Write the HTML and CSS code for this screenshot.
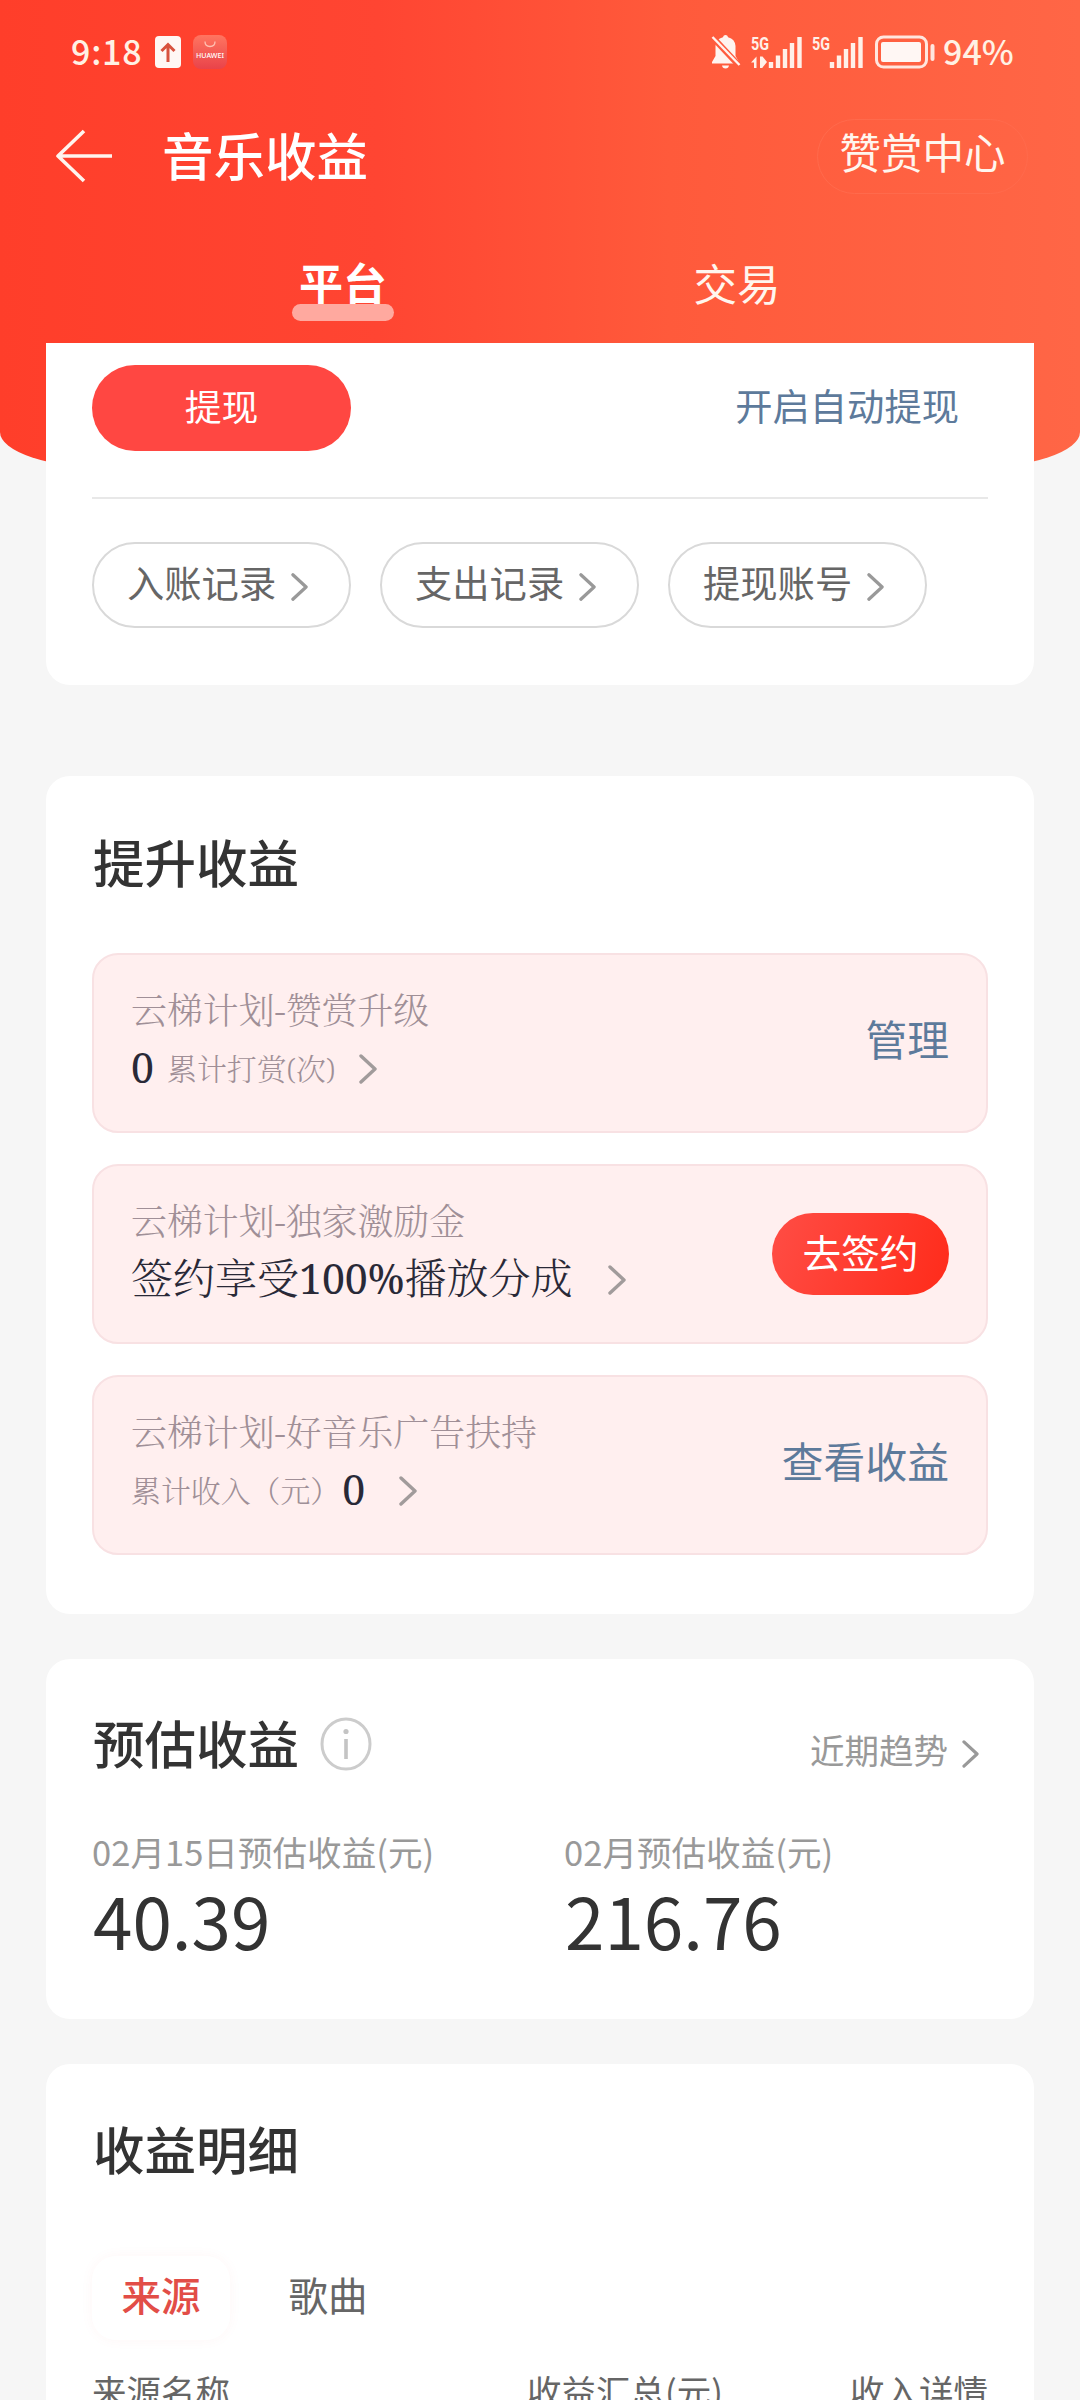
FILE: index.html
```html
<!DOCTYPE html>
<html lang="zh-CN">
<head>
<meta charset="utf-8">
<title>音乐收益</title>
<link rel="stylesheet" href="styles.css">
</head>
<body>
<svg class="defs" width="0" height="0" aria-hidden="true">
  <symbol id="chevron" viewBox="0 0 18 30"><path d="M2 2 16 15 2 28" fill="none" stroke="currentColor" stroke-width="3.400" stroke-linecap="round" stroke-linejoin="round"/></symbol>
</svg>
<header class="header">
  <div class="status">
    <div class="status-left">
      <span class="clock">9:18</span>
      <svg class="upload" width="26" height="32" viewBox="0 0 26 32"><rect width="26" height="32" rx="4" fill="#fff7f4"/><path d="M13 26V9M6.500 15 13 8.500 19.500 15" fill="none" stroke="#d8523e" stroke-width="3"/></svg>
      <svg class="store" width="34" height="34" viewBox="0 0 34 34"><defs><linearGradient id="g" x2="0" y2="1"><stop stop-color="#ff7560"/><stop offset="1" stop-color="#e9434a"/></linearGradient></defs><rect width="34" height="34" rx="8" fill="url(#g)"/><path d="M12 6.500q0 5 5 5t5-5" fill="none" stroke="#ffc0b2" stroke-width="1.300"/><text x="17" y="22.500" text-anchor="middle" textLength="28" lengthAdjust="spacingAndGlyphs" class="store-name">HUAWEI</text></svg>
    </div>
    <div class="status-right">
      <svg width="30" height="36" viewBox="0 0 30 36"><path d="M14.500 1q2 0 2.600 2.200Q24 5 24.500 12v10l3.500 6v1.500H1V28l3.500-6V12Q5 5 11.900 3.200 12.500 1 14.500 1Z" fill="#fff4f0"/><path d="M11 31.500h7q-.5 3-3.500 3t-3.500-3Z" fill="#fff4f0"/><path d="M0 1.500 28 31.500" stroke="#ff5b3e" stroke-width="6"/><path d="M1.500 3 28.500 31" stroke="#fff4f0" stroke-width="2.400"/></svg>
      <svg class="signal" width="51" height="34" viewBox="0 0 51 34"><text x="0" y="15" textLength="18" lengthAdjust="spacingAndGlyphs" class="net">5G</text><path d="M5.500 33V21.500L0 27.500h3V33ZM9 33V21.500h2.500L16 27l-4.500 5.500V33Z" fill="#fff0e8"/><path d="M20 33v-6M27 33V20.500M34 33V14M41 33V8M48.500 33V2" stroke="#fff0e8" stroke-width="4.400"/></svg>
      <svg class="signal" width="51" height="34" viewBox="0 0 51 34"><text x="0" y="15" textLength="18" lengthAdjust="spacingAndGlyphs" class="net">5G</text><path d="M20 33v-6M27 33V20.500M34 33V14M41 33V8M48.500 33V2" stroke="#fff0e8" stroke-width="4.400"/></svg>
      <svg class="battery" width="60" height="34" viewBox="0 0 60 34"><rect x="1.500" y="2" width="50" height="30" rx="7" fill="none" stroke="#ffe6de" stroke-width="3"/><rect x="6" y="7" width="40" height="20" rx="2" fill="#fff7f4"/><rect x="55.500" y="9" width="4" height="17" rx="2" fill="#ffe6de"/></svg>
      <span class="percent">94%</span>
    </div>
  </div>
  <div class="navbar">
    <svg class="back" width="58" height="54" viewBox="0 0 58 54"><path d="M56 27H2M28 2 2 27 28 52" fill="none" stroke="#fff4ee" stroke-width="3.600" stroke-linejoin="round"/></svg>
    <h1 class="page-title">音乐收益</h1>
    <a class="reward">赞赏中心</a>
  </div>
  <nav class="tabs">
    <a class="tab tab-active">平台</a>
    <a class="tab">交易</a>
  </nav>
</header>

<main class="content">
  <section class="card balance">
    <div class="withdraw-row">
      <button class="withdraw">提现</button>
      <a class="auto">开启自动提现</a>
    </div>
    <div class="pills">
      <a class="pill">入账记录<svg class="chev-s"><use href="#chevron"/></svg></a>
      <a class="pill">支出记录<svg class="chev-s"><use href="#chevron"/></svg></a>
      <a class="pill">提现账号<svg class="chev-s"><use href="#chevron"/></svg></a>
    </div>
  </section>

  <section class="card boost">
    <h2 class="title">提升收益</h2>
    <div class="plans">
      <div class="plan">
        <div class="plan-text">
          <div class="plan-name">云梯计划-赞赏升级</div>
          <div class="plan-line"><span class="num">0</span><span class="unit">累计打赏(次)</span><svg class="chev"><use href="#chevron"/></svg></div>
        </div>
        <a class="plan-link">管理</a>
      </div>
      <div class="plan">
        <div class="plan-text">
          <div class="plan-name">云梯计划-独家激励金</div>
          <div class="plan-line"><span class="offer">签约享受<span class="rate">100%</span>播放分成</span><svg class="chev chev-far"><use href="#chevron"/></svg></div>
        </div>
        <button class="sign">去签约</button>
      </div>
      <div class="plan">
        <div class="plan-text">
          <div class="plan-name">云梯计划-好音乐广告扶持</div>
          <div class="plan-line"><span class="unit">累计收入（元）</span><span class="num num-after">0</span><svg class="chev chev-far"><use href="#chevron"/></svg></div>
        </div>
        <a class="plan-link">查看收益</a>
      </div>
    </div>
  </section>

  <section class="card estimate">
    <div class="estimate-head">
      <h2 class="title">预估收益</h2>
      <svg class="info" width="52" height="54" viewBox="0 0 52 54"><ellipse cx="26" cy="27" rx="24" ry="25" fill="none" stroke="#ccc" stroke-width="3"/><circle cx="26" cy="14.500" r="2.600" fill="#c4c4c4"/><path d="M26 22v20" stroke="#c4c4c4" stroke-width="3.600"/></svg>
      <a class="trend">近期趋势<svg class="chev-s chev-trend"><use href="#chevron"/></svg></a>
    </div>
    <div class="figures">
      <div class="figure"><div class="label">02月15日预估收益(元)</div><div class="value">40.39</div></div>
      <div class="figure"><div class="label">02月预估收益(元)</div><div class="value">216.76</div></div>
    </div>
  </section>

  <section class="card detail">
    <h2 class="title">收益明细</h2>
    <div class="switch">
      <a class="seg seg-active">来源</a>
      <a class="seg">歌曲</a>
    </div>
    <div class="table-head"><span>来源名称</span><span>收益汇总(元)</span><span>收入详情</span></div>
  </section>
</main>
</body>
</html>
```
FILE: styles.css
```css
* { box-sizing: border-box; }
html, body { margin: 0; width: 1080px; height: 2400px; overflow: hidden; }
body {
  background: #f6f6f6;
  color: #333;
  font-family: "Noto Sans CJK SC", sans-serif;
}
h1, h2 { margin: 0; font-weight: 500; }
button { border: 0; padding: 0; font-family: inherit; color: #fff; }
svg { display: block; flex: none; }
.defs { position: absolute; }

.header {
  height: 468px;
  background: linear-gradient(90deg, #ff3e2a 0%, #ff4532 35%, #ff5a3b 62%, #ff6646 100%);
  border-radius: 0 0 110px 110px / 0 0 36px 36px;
  color: #fff6ee;
}
.status { display: flex; justify-content: space-between; height: 104px; padding: 0 67px 0 71px; }
.status-left, .status-right { display: flex; align-items: center; }
.clock, .percent { font-size: 34px; line-height: 40px; padding-bottom: 2px; font-weight: 500; color: #fff1e4; }
.clock { width: 84px; letter-spacing: .8px; }
.store { margin-left: 12px; }
.store-name { font: 500 7px "Noto Sans", sans-serif; fill: #fff; }
.net { font: 700 19px "Roboto", sans-serif; fill: #fff0e8; }
.signal { margin-left: 10px; overflow: visible; }
.battery { margin: 0 8px 0 12px; }
.percent { width: 70px; }

.navbar { display: flex; align-items: center; height: 104px; padding: 0 52px 0 56px; }
.page-title { margin-left: 48px; font-size: 51.500px; line-height: 70px; color: #fff; flex: 1; padding-bottom: 5px; }
.reward {
  width: 211px; height: 75px; border: 1px solid #ff6a4c; border-radius: 38px;
  font-size: 41.500px; line-height: 63px; text-align: center;
}
.tabs { display: grid; grid-template-columns: 394px 394px; justify-content: center; height: 135px; padding-top: 44px; }
.tab { position: relative; font-size: 43.500px; line-height: 61px; text-align: center; }
.tab-active { font-size: 44px; font-weight: 700; color: #fff; }
.tab-active::after {
  content: ""; position: absolute; left: 50%; top: 52px; margin-left: -51px;
  width: 102px; height: 17px; border-radius: 9px; background: #ffa99f;
}

.content { display: flex; flex-direction: column; margin-top: -125px; }
.card { margin: 0 46px; padding: 0 46px; background: #fff; border-radius: 24px; }
.title { font-size: 51.500px; line-height: 72px; color: #333; padding-left: 1px; }

.balance { position: relative; height: 342px; padding-top: 22px; border-radius: 0 0 24px 24px; }
.withdraw-row { display: flex; justify-content: space-between; height: 134px; border-bottom: 2px solid #e8e8e8; padding-right: 29px; }
.withdraw { width: 259px; height: 86px; padding-bottom: 7px; border-radius: 43px; background: #ff4742; font-size: 36.800px; line-height: 50px; }
.auto { font-size: 37.300px; line-height: 80px; color: #5d7a9b; }
.pills { display: flex; gap: 29px; margin-top: 43px; }
.pill {
  display: flex; align-items: center; width: 259px; height: 86px; padding: 0 0 7px 33px;
  border: 2px solid #d9d9d9; border-radius: 43px; font-size: 37.300px; line-height: 50px; color: #666; white-space: nowrap;
}
.chev-s { width: 17px; height: 30px; margin: 10px 0 0 15px; color: #999; }

.boost { height: 838px; margin-top: 91px; padding-top: 49px; }
.plans { display: flex; flex-direction: column; gap: 31px; margin-top: 56px; }
.plan {
  display: flex; justify-content: space-between; align-items: center; height: 180px; padding: 0 37px 0 37px;
  border: 2px solid #f8e1e3; border-radius: 26px; background: #ffefef;
}
.plan-text { align-self: flex-start; padding-top: 30px; font-family: "Noto Serif", "Noto Serif CJK SC", "Noto Sans CJK SC", serif; font-weight: 300; color: #a08f97; }
.plan-name { font-size: 35.900px; line-height: 52px; }
.plan-line { display: flex; align-items: center; height: 60px; line-height: 56px; white-space: nowrap; }
.num { width: 36px; font-size: 41px; font-weight: 400; color: #292937; }
.unit { font-size: 29.900px; padding-top: 4px; }
.num-after { width: 22px; margin-left: 2px; }
.offer { font-size: 42px; color: #292937; }
.rate { font-weight: 400; font-size: 41px; }
.chev { width: 18px; height: 30px; color: #a19b9b; margin: 4px 0 0 24px; }
.chev-far { margin-left: 35px; }
.plan-link { font-size: 41.800px; line-height: 60px; padding-bottom: 10px; color: #5d7a9b; }
.sign {
  width: 177px; height: 82px; padding-bottom: 7px; border-radius: 41px;
  background: linear-gradient(110deg, #ff4d45, #ff2b1a); font-size: 38.700px; line-height: 56px;
}

.estimate { height: 360px; margin-top: 45px; padding-top: 46px; }
.estimate-head { display: flex; align-items: center; height: 77px; }
.estimate-head .title { padding-bottom: 3px; }
.info { margin: 1px 0 0 21px; }
.trend { display: flex; align-items: center; margin-left: auto; padding: 10px 9px 0 0; font-size: 34.500px; line-height: 50px; color: #999; }
.chev-trend { height: 28px; margin-left: 14px; }
.figures { display: grid; grid-template-columns: 472px 1fr; margin-top: 44px; }
.label { font-size: 34.600px; line-height: 50px; color: #999; white-space: nowrap; }
.value { font-size: 71px; line-height: 87px; color: #333; padding-left: 1px; }

.detail { height: 336px; margin-top: 45px; padding-top: 48px; border-radius: 24px 24px 0 0; }
.switch { display: flex; margin-top: 72px; height: 84px; }
.seg { width: 138px; height: 84px; border-radius: 24px; text-align: center; font-size: 39.500px; line-height: 76px; color: #666; margin-right: 29px; }
.seg-active { font-weight: 500; color: #e24d47; box-shadow: 0 0 14px rgba(230, 60, 60, .04); }
.table-head { display: grid; grid-template-columns: 435px 1fr auto; margin-top: 25px; font-size: 34.500px; line-height: 50px; color: #666; }
```
